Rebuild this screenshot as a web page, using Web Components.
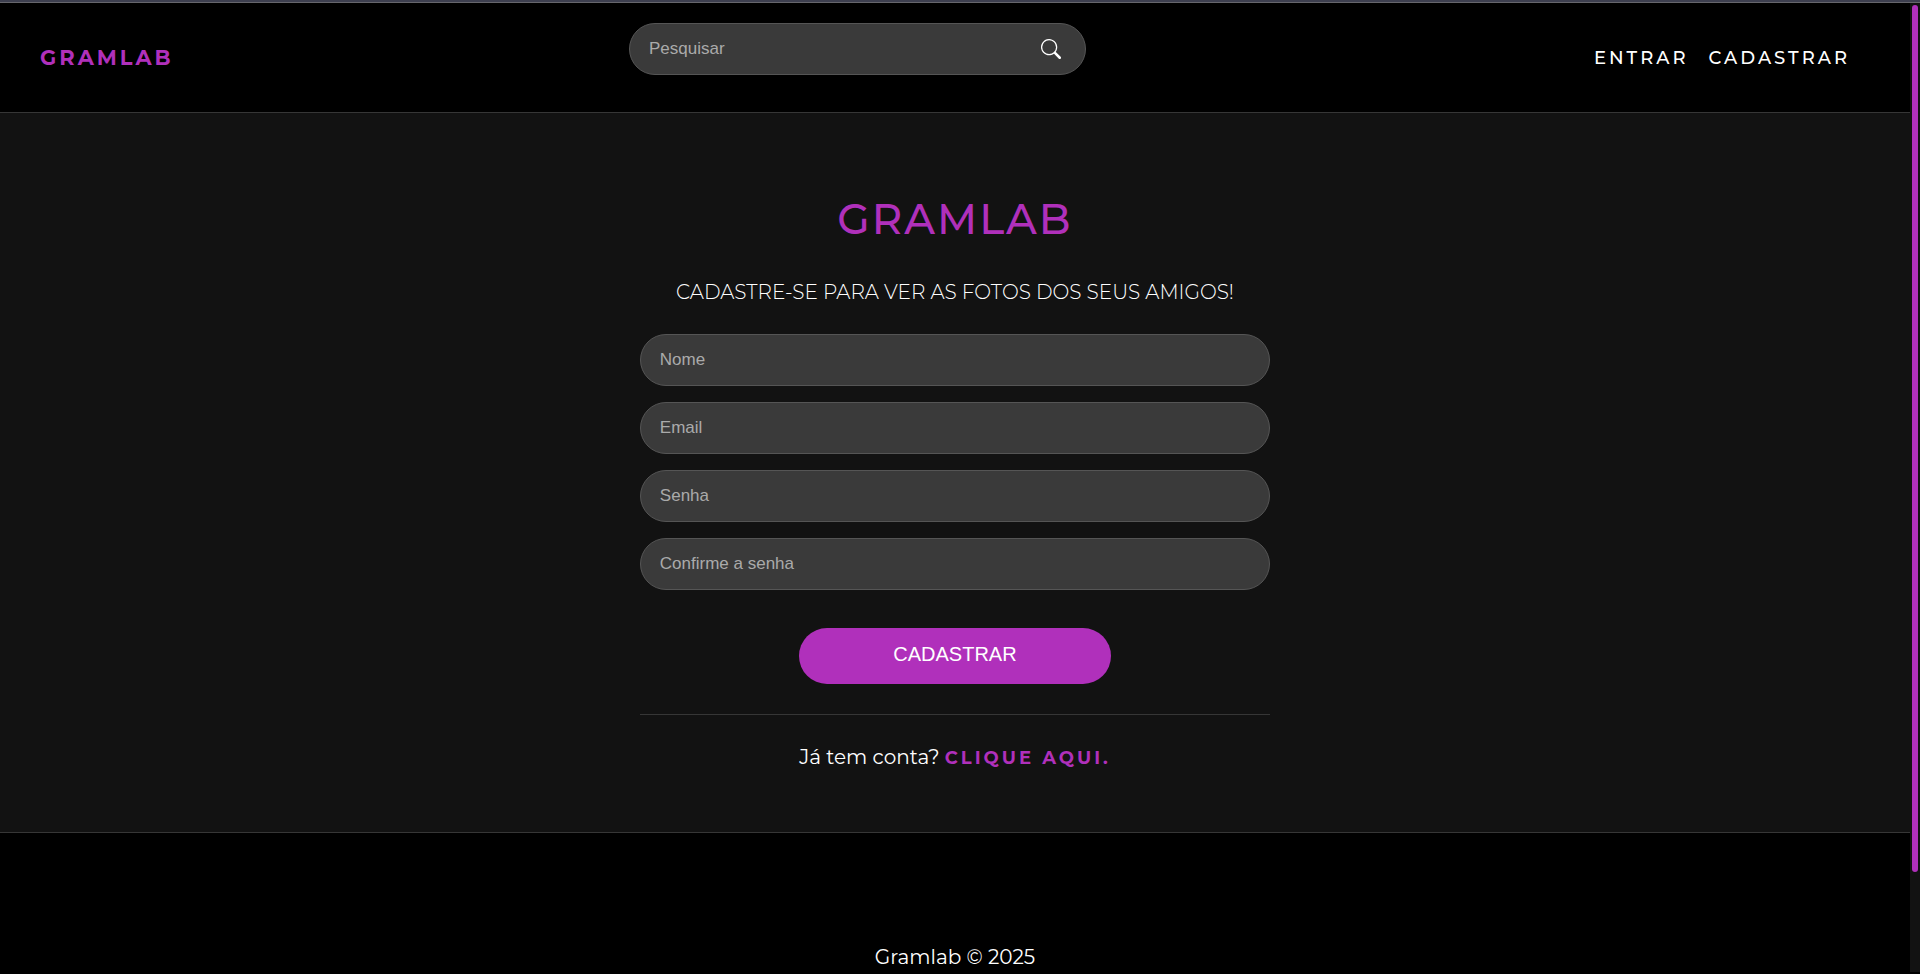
<!DOCTYPE html>
<html lang="pt-BR">
<head>
<meta charset="utf-8">
<meta name="viewport" content="width=device-width, initial-scale=1">
<title>Gramlab</title>
<style>
  :root {
    --accent: #b030bb;
    --surface: #121212;
    --field: #3a3a3a;
    --field-line: #555;
    --line: #363636;
    --ui: "Liberation Sans", Arial, sans-serif;
  }
  body { margin: 0; background: #000; color: #fff; font: 20px/24px Montserrat, Inter, sans-serif; }
</style>
</head>
<body>
<gram-app></gram-app>

<script>
const define = (name, html, setup) => {
  const template = document.createElement('template');
  template.innerHTML = html;
  customElements.define(name, class extends HTMLElement {
    constructor() {
      super();
      this.attachShadow({ mode: 'open' }).append(template.content.cloneNode(true));
    }
    connectedCallback() { if (setup) setup(this, this.shadowRoot); }
  });
};

define('gram-brand', `
  <style>
    :host { display: block; }
    a { color: var(--accent); text-decoration: none; font-size: 21px; font-weight: 700; letter-spacing: 3px; }
  </style>
  <a href="#"><slot></slot></a>`);

define('gram-search', `
  <style>
    :host { display: block; }
    form { display: flex; align-items: center; box-sizing: border-box; height: 52px; padding: 0 24px 0 19px;
      border: 1px solid var(--field-line); border-radius: 26px; background: var(--field); }
    input { flex: 1; min-width: 0; padding: 0; border: 0; outline: 0; background: none; color: #fff; font: 17px/20px var(--ui); }
    input::placeholder { color: #aaa; opacity: 1; }
    button { display: flex; padding: 0; border: 0; background: none; color: #fff; cursor: pointer; }
  </style>
  <form role="search">
    <input type="text" placeholder="Pesquisar" aria-label="Pesquisar">
    <button type="button" aria-label="Pesquisar">
      <svg width="20" height="20" viewBox="0 0 16 16" fill="currentColor" aria-hidden="true"><path d="M11.742 10.344a6.5 6.5 0 1 0-1.397 1.398h-.001c.03.04.062.078.098.115l3.85 3.85a1 1 0 0 0 1.415-1.414l-3.85-3.85a1.007 1.007 0 0 0-.115-.1zM12 6.5a5.5 5.5 0 1 1-11 0 5.5 5.5 0 0 1 11 0z"/></svg>
    </button>
  </form>`);

define('gram-header', `
  <style>
    header { display: grid; grid-template-columns: 589fr 457fr 764fr; align-items: center; height: 109px;
      padding: 0 60px 0 40px; border-bottom: 1px solid var(--line); background: #000; }
    gram-search { align-self: start; margin-top: 20px; }
    nav { display: flex; justify-content: flex-end; gap: 20px; }
    nav a { color: #fff; text-decoration: none; font-size: 18px; font-weight: 500; letter-spacing: 3px; }
  </style>
  <header>
    <gram-brand>GRAMLAB</gram-brand>
    <gram-search></gram-search>
    <nav><a href="#entrar">ENTRAR</a><a href="#cadastrar">CADASTRAR</a></nav>
  </header>`);

define('gram-field', `
  <style>
    :host { display: block; }
    input { display: block; box-sizing: border-box; width: 100%; height: 52px; padding: 0 19px; outline: 0;
      border: 1px solid var(--field-line); border-radius: 26px; background: var(--field); color: #fff; font: 17px/20px var(--ui); }
    input::placeholder { color: #aaa; opacity: 1; }
  </style>
  <input>`, (host, root) => {
  const input = root.querySelector('input');
  input.type = host.getAttribute('type') || 'text';
  input.placeholder = host.getAttribute('label');
  input.setAttribute('aria-label', host.getAttribute('label'));
});

define('gram-signup', `
  <style>
    :host { display: block; }
    main { display: flex; flex-direction: column; align-items: center; padding: 80px 0 63px;
      border-bottom: 1px solid var(--line); background: var(--surface); text-align: center; }
    h1 { margin: 0; color: var(--accent); font-size: 42px; line-height: 52px; font-weight: 500; letter-spacing: 2px; }
    h2 { margin: 35px 0 30px; font-size: 20px; line-height: 24px; font-weight: 300; }
    form { display: flex; flex-direction: column; gap: 16px; width: 33%; min-width: 320px; }
    button { align-self: center; width: 312px; height: 56px; margin-top: 22px; padding: 0 0 4px; border: 0; border-radius: 28px;
      background: var(--accent); color: #fff; font: 20px/24px var(--ui); cursor: pointer; }
    .login { box-sizing: border-box; width: 33%; min-width: 320px; margin: 30px 0 0; padding-top: 30px; border-top: 1px solid var(--line); }
    .login a { color: var(--accent); text-decoration: none; font-size: 18px; line-height: 20px; font-weight: 700; letter-spacing: 3px; }
  </style>
  <main>
    <h1>GRAMLAB</h1>
    <h2>CADASTRE-SE PARA VER AS FOTOS DOS SEUS AMIGOS!</h2>
    <form>
      <gram-field label="Nome"></gram-field>
      <gram-field label="Email" type="email"></gram-field>
      <gram-field label="Senha" type="password"></gram-field>
      <gram-field label="Confirme a senha" type="password"></gram-field>
      <button type="button">CADASTRAR</button>
    </form>
    <p class="login">Já tem conta? <a href="#entrar">CLIQUE AQUI.</a></p>
  </main>`);

define('gram-footer', `
  <style>
    :host { display: block; }
    footer { padding: 112px 0; background: #000; text-align: center; }
  </style>
  <footer><slot></slot></footer>`);

define('gram-scrollbar', `
  <style>
    :host { display: block; box-sizing: border-box; padding: 2px 2px 4px; margin-bottom: 2px; background: var(--surface); }
    div { height: 90%; border-radius: 3px; background: var(--accent); }
  </style>
  <div></div>`);

define('gram-app', `
  <style>
    :host { display: grid; box-sizing: border-box; grid-template: 1px minmax(0, 1fr) / 1fr 10px; height: 100vh; overflow: hidden;
      border-top: 2px solid #3d3f4f; }
    .edge { grid-column: 1 / -1; background: #66666c; }
    .page { min-width: 0; overflow: hidden; }
  </style>
  <div class="edge"></div>
  <div class="page">
    <gram-header></gram-header>
    <gram-signup></gram-signup>
    <gram-footer>Gramlab © 2025</gram-footer>
  </div>
  <gram-scrollbar></gram-scrollbar>`);
</script>
</body>
</html>
